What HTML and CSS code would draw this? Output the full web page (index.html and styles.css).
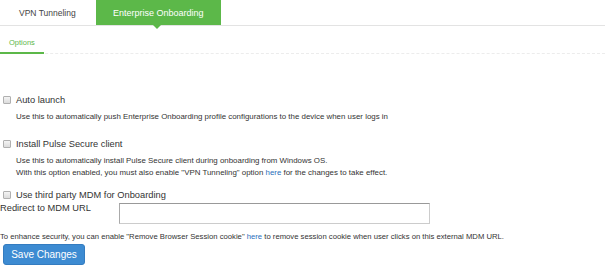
FILE: index.html
```html
<!DOCTYPE html>
<html lang="en">
<head>
    <meta charset="UTF-8">
    <title>Enterprise Onboarding</title>
    <link rel="stylesheet" href="styles.css">
</head>
<body>
    <div class="tabs">
        <a class="tab" href="#">VPN Tunneling</a>
        <a class="tab active" href="#">Enterprise Onboarding</a>
    </div>
    <div class="subtabs">
        <a class="subtab active" href="#">Options</a>
    </div>
    <div class="form">
        <div class="option">
            <label class="check"><input type="checkbox"> Auto launch</label>
            <p class="help">Use this to automatically push Enterprise Onboarding profile configurations to the device when user logs in</p>
        </div>
        <div class="option">
            <label class="check"><input type="checkbox"> Install Pulse Secure client</label>
            <p class="help">Use this to automatically install Pulse Secure client during onboarding from Windows OS.<br>
            With this option enabled, you must also enable "VPN Tunneling" option <a href="#">here</a> for the changes to take effect.</p>
        </div>
        <div class="option mdm">
            <label class="check"><input type="checkbox"> Use third party MDM for Onboarding</label>
            <div class="field">
                <span class="field-label">Redirect to MDM URL</span>
                <input type="text" class="text-input">
            </div>
        </div>
        <p class="note">To enhance security, you can enable "Remove Browser Session cookie" <a href="#">here</a> to remove session cookie when user clicks on this external MDM URL.</p>
        <button class="btn">Save Changes</button>
    </div>
</body>
</html>
```

FILE: styles.css
```css
body {
    font-family: 'Liberation Sans', Arial, sans-serif;
    margin: 0;
    padding: 0;
    background-color: #fff;
    color: #333;
}
a {
    color: #2a6ebb;
    text-decoration: none;
}
.tabs {
    display: flex;
    height: 25px;
    border-bottom: 1px solid #e3e3e3;
}
.tab {
    display: flex;
    align-items: center;
    justify-content: center;
    font-size: 8.5px;
    color: #444;
    padding: 0 20px 0 19px;
}
.tab.active {
    position: relative;
    width: 125px;
    padding: 0;
    background-color: #5cb849;
    color: white;
    font-size: 9px;
}
.tab.active::after {
    content: "";
    position: absolute;
    left: 57px;
    bottom: -4px;
    border-left: 4px solid transparent;
    border-right: 4px solid transparent;
    border-top: 4px solid #5cb849;
}
.subtabs {
    display: flex;
    margin-top: 12px;
    border-bottom: 1px dashed #ececec;
}
.subtab {
    display: block;
    width: 44px;
    padding: 0 0 5px 9px;
    box-sizing: border-box;
    font-size: 7.5px;
    color: #5cb849;
    border-bottom: 2px solid #5cb849;
    margin-bottom: -1px;
}
.form {
    padding: 41px 0 0 0;
}
.option {
    margin-bottom: 16px;
}
.option + .option {
    margin-bottom: 11px;
}
.option.mdm {
    margin-bottom: 8px;
}
.check {
    display: flex;
    align-items: center;
    gap: 5px;
    font-size: 9.3px;
    padding-left: 3px;
}
.check input {
    appearance: none;
    width: 8px;
    height: 8px;
    margin: 0;
    border: 1px solid #b0b0b0;
    border-radius: 1px;
    background: linear-gradient(#f4f4f4, #dcdcdc);
}
.help {
    margin: 6px 0 0 16px;
    font-size: 7.9px;
    line-height: 12px;
}
.field {
    display: flex;
    align-items: flex-start;
    margin-top: 3px;
}
.field-label {
    width: 119px;
    font-size: 9.3px;
    padding-top: 0;
}
.text-input {
    width: 311px;
    height: 21px;
    box-sizing: border-box;
    margin: 0;
    border: 1px solid #ccc;
    border-top-color: #999;
    border-left-color: #aaa;
}
.note {
    margin: 0 0 3px;
    font-size: 7.7px;
}
.btn {
    margin-left: 3px;
    width: 82px;
    height: 21px;
    background-color: #3d8bd2;
    color: white;
    border: 1px solid #347cc0;
    border-radius: 3px;
    font-family: 'Liberation Sans', Arial, sans-serif;
    font-size: 10px;
    padding: 0;
}
```
